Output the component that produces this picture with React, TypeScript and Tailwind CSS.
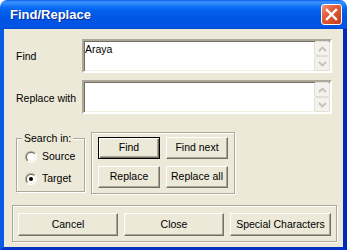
import React from "react";

const font = "font-['Liberation_Sans','Noto_Sans',Arial,sans-serif]";

const etched = "border border-[#aca899] shadow-[inset_1px_1px_0_#ffffff,1px_1px_0_#ffffff]";

function Button({ label, className = "", isDefault = false }: { label: string; className?: string; isDefault?: boolean }) {
  const edge = isDefault
    ? "border border-black shadow-[inset_1px_1px_0_#ffffff,inset_-1px_-1px_0_#716f64,inset_-2px_-2px_0_#aca899]"
    : "border border-t-white border-l-white border-r-[#716f64] border-b-[#716f64] shadow-[inset_-1px_-1px_0_#aca899]";
  return (
    <div className={`flex items-center justify-center bg-[#ece9d8] text-[10.5px] text-black ${edge} ${className}`}>
      {label}
    </div>
  );
}

function ScrollArrow({ up }: { up?: boolean }) {
  return (
    <div className="flex h-[15px] w-[16px] items-center justify-center rounded-[2px] border border-[#e2e0d6] bg-[#f3f2ec]">
      <svg width="9" height="6" viewBox="0 0 9 6">
        <path d={up ? "M1 5 L4.5 1.5 L8 5" : "M1 1 L4.5 4.5 L8 1"} fill="none" stroke="#c4c2b6" strokeWidth="1.8" />
      </svg>
    </div>
  );
}

function TextBox({ value = "" }: { value?: string }) {
  return (
    <div className="flex h-[34px] w-[250px] border-2 border-t-[#aca899] border-l-[#aca899] border-r-white border-b-white bg-white shadow-[inset_1px_1px_0_#716f64,inset_-1px_-1px_0_#f1efe2]">
      <div className="flex-1 pl-[1px] pt-[2px] text-[10.5px] leading-[13px] text-black">{value}</div>
      <div className="flex flex-col">
        <ScrollArrow up />
        <ScrollArrow />
      </div>
    </div>
  );
}

function Radio({ label, checked = false }: { label: string; checked?: boolean }) {
  return (
    <div className="flex h-[22px] items-center gap-[5px]">
      <svg width="12" height="12" viewBox="0 0 12 12">
        <defs>
          <linearGradient id="ro" x1="0" y1="0" x2="1" y2="1">
            <stop offset="0.5" stopColor="#aca899" />
            <stop offset="0.5" stopColor="#ffffff" />
          </linearGradient>
          <linearGradient id="ri" x1="0" y1="0" x2="1" y2="1">
            <stop offset="0.5" stopColor="#716f64" />
            <stop offset="0.5" stopColor="#f1efe2" />
          </linearGradient>
        </defs>
        <circle cx="6" cy="6" r="6" fill="url(#ro)" />
        <circle cx="6" cy="6" r="5" fill="url(#ri)" />
        <circle cx="6" cy="6" r="4" fill="#ffffff" />
        {checked && <circle cx="6" cy="6" r="2" fill="#000000" />}
      </svg>
      <span className="text-[10.5px] text-black">{label}</span>
    </div>
  );
}

export default function App() {
  return (
    <div className={`h-[251px] w-[349px] bg-white ${font}`}>
      <div className="flex h-[250px] w-[347px] flex-col">
        <div className="flex h-[29px] items-center justify-between rounded-t-[7px] bg-[linear-gradient(180deg,#0a5de8_0px,#3d93ff_2px,#2a88fb_4px,#0d6ef7_7px,#0260ec_11px,#0057e5_17px,#0054e3_23px,#0056ea_26px,#004ad4_29px)] pl-[10px] pr-[5px]">
          <span className="text-[13px] font-bold text-white [text-shadow:1px_1px_0_#0a2a9a]">Find/Replace</span>
          <div className="flex h-[21px] w-[21px] items-center justify-center rounded-[3px] border border-white bg-[linear-gradient(135deg,#f0957a_0%,#e2603f_35%,#d44d28_70%,#c03a16_100%)]">
            <svg width="19" height="19" viewBox="0 0 19 19">
              <path d="M5 5 L14 14 M14 5 L5 14" stroke="#ffffff" strokeWidth="2.4" strokeLinecap="square" />
            </svg>
          </div>
        </div>

        <div className="flex flex-1 flex-col border-b-[3px] border-l-4 border-r-4 border-b-[#0033c4] border-l-[#0a5ae6] border-r-[#0029bc] bg-[#ece9d8] pt-[10px] text-black">
          <div className="flex items-center pl-[12px]">
            <span className="w-[66px] pt-[2px] text-[10.5px]">Find</span>
            <TextBox value="Araya" />
          </div>
          <div className="mt-[7px] flex items-center pl-[12px]">
            <span className="w-[66px] pt-[3px] text-[10.5px]">Replace with</span>
            <TextBox />
          </div>

          <div className="mt-[18px] flex items-start gap-[6px] pl-[12px]">
            <fieldset className={`h-[60px] w-[69px] ${etched} pl-[8px]`}>
              <legend className="ml-[-3px] bg-[#ece9d8] px-[2px] text-[10.5px] leading-[13px]">Search in:</legend>
              <div className="flex flex-col pt-[1px]">
                <Radio label="Source" />
                <Radio label="Target" checked />
              </div>
            </fieldset>
            <div className={`grid h-[62px] w-[144px] grid-cols-[62px_62px] gap-x-[6px] gap-y-[7px] ${etched} pb-[5px] pl-[6px] pr-[6px] pt-[4px]`}>
              <Button label="Find" isDefault className="h-[22px]" />
              <Button label="Find next" className="h-[22px]" />
              <Button label="Replace" className="h-[22px]" />
              <Button label="Replace all" className="h-[22px]" />
            </div>
          </div>

          <div className={`ml-[8px] mt-[11px] flex h-[37px] w-[325px] gap-[6px] ${etched} pl-[5px] pt-[7px]`}>
            <Button label="Cancel" className="h-[23px] w-[100px]" />
            <Button label="Close" className="h-[23px] w-[100px]" />
            <Button label="Special Characters" className="h-[23px] w-[101px]" />
          </div>
        </div>
      </div>
    </div>
  );
}
